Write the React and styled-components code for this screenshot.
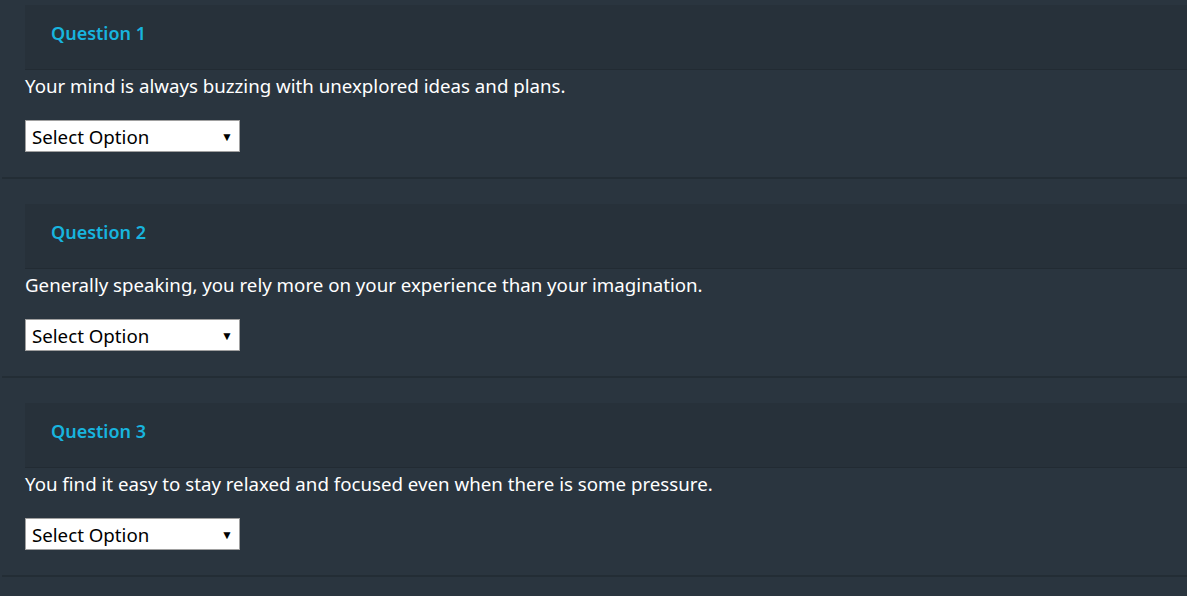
import styled, { createGlobalStyle } from "styled-components";

const GlobalStyle = createGlobalStyle`
  html, body {
    margin: 0;
    padding: 0;
    background: #2a353f;
    font-family: "Noto Sans", "Open Sans", sans-serif;
    overflow: hidden;
  }
`;

const Page = styled.div`
  margin-top: -20px;
`;

const Card = styled.div`
  margin-left: 2px;
  padding: 25px 0 25px 23px;
  border-bottom: 2px solid #232d35;
`;

const Header = styled.div`
  background: #27313a;
  border-bottom: 1px solid #222b33;
  height: 65px;
  padding-left: 26px;
  display: flex;
  align-items: center;
  padding-bottom: 8px;
  box-sizing: border-box;

  h3 {
    margin: 0;
    color: #18b4de;
    font-size: 18px;
    font-weight: 600;
  }
`;

const Text = styled.p`
  margin: 3px 0 21px;
  color: #ffffff;
  font-size: 18.7px;
  line-height: 26px;
`;

const SelectWrap = styled.div`
  position: relative;
  width: 215px;
  height: 32px;

  &::after {
    content: "▼";
    position: absolute;
    right: 7px;
    top: 8px;
    font-size: 12px;
    color: #000;
    pointer-events: none;
  }
`;

const Select = styled.select`
  appearance: none;
  width: 100%;
  height: 100%;
  box-sizing: border-box;
  border: 1px solid #a0a0a0;
  background: #fff;
  color: #000;
  font-family: "Noto Sans", "Open Sans", sans-serif;
  font-size: 18.7px;
  padding: 0 0 0 6px;
  border-radius: 0;
  outline: none;
`;

const questions = [
  "Your mind is always buzzing with unexplored ideas and plans.",
  "Generally speaking, you rely more on your experience than your imagination.",
  "You find it easy to stay relaxed and focused even when there is some pressure.",
];

export default function App() {
  return (
    <Page>
      <GlobalStyle />
      {questions.map((q, i) => (
        <Card key={i}>
          <Header>
            <h3>Question {i + 1}</h3>
          </Header>
          <Text>{q}</Text>
          <SelectWrap>
            <Select defaultValue="">
              <option value="">Select Option</option>
              <option>Agree</option>
              <option>Neutral</option>
              <option>Disagree</option>
            </Select>
          </SelectWrap>
        </Card>
      ))}
    </Page>
  );
}
